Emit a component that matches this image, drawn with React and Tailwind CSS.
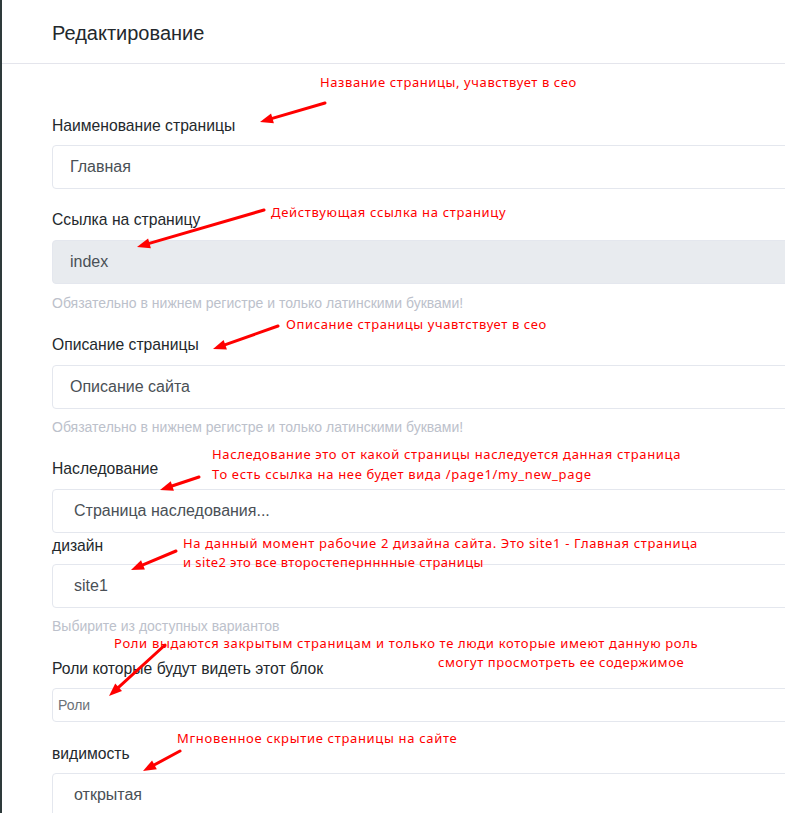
import React from "react";

const arrows = [
  [325, 103, 260, 122],
  [264, 210, 137, 247],
  [278, 326, 213, 349],
  [199, 477, 160, 490],
  [176, 551, 131, 570],
  [165, 645, 109, 696],
  [180, 751, 143, 771],
];

function Arrow({ x1, y1, x2, y2 }) {
  const dx = x2 - x1;
  const dy = y2 - y1;
  const len = Math.hypot(dx, dy);
  const ux = dx / len;
  const uy = dy / len;
  const hl = 13;
  const hw = 5;
  const bx = x2 - ux * hl;
  const by = y2 - uy * hl;
  const px = -uy;
  const py = ux;
  const pts = `${x2},${y2} ${bx + px * hw},${by + py * hw} ${bx - px * hw},${by - py * hw}`;
  return (
    <g>
      <line x1={x1} y1={y1} x2={bx + ux * 2} y2={by + uy * 2} stroke="#ff0000" strokeWidth="3" strokeLinecap="round" />
      <polygon points={pts} fill="#ff0000" />
    </g>
  );
}

const notes = [
  { t: "Название страницы, учавствует в сео", x: 320, y: 73, cls: "tracking-[0.6px]" },
  { t: "Действующая ссылка на страницу", x: 271, y: 203, cls: "tracking-[0.66px]" },
  { t: "Описание страницы учавтствует в сео", x: 286, y: 315, cls: "tracking-[0.6px]" },
  { t: "Наследование это от какой страницы наследуется данная страница", x: 212, y: 445, cls: "tracking-[0.66px]" },
  { t: "То есть ссылка на нее будет вида /page1/my_new_page", x: 212, y: 465, cls: "tracking-[0.68px]" },
  { t: "На данный момент рабочие 2 дизайна сайта. Это site1 - Главная страница", x: 183, y: 534, cls: "tracking-[0.65px]" },
  { t: "и site2 это все второстепернннные страницы", x: 183, y: 553, cls: "tracking-[0.4px]" },
  { t: "Роли выдаются закрытым страницам и только те люди которые имеют данную роль", x: 114, y: 634, cls: "tracking-[0.67px]" },
  { t: "смогут просмотреть ее содержимое", x: 438, y: 653, cls: "tracking-[0.57px]" },
  { t: "Мгновенное скрытие страницы на сайте", x: 177, y: 729, cls: "tracking-[0.68px]" },
];

function Label({ children, className = "" }) {
  return (
    <div className={`h-6 leading-6 text-[15.7px] text-[#23282c] ${className}`}>{children}</div>
  );
}

function Field({ children, className = "", disabled = false }) {
  return (
    <div
      className={`h-[44px] border border-[#e4e7ee] rounded-[4px] flex items-center text-[16px] text-[#4a5056] ${
        disabled ? "bg-[#e8ebef]" : "bg-white"
      } ${className}`}
    >
      {children}
    </div>
  );
}

function Help({ children, className = "" }) {
  return <div className={`h-5 leading-5 text-[14px] text-[#bcc1cb] ${className}`}>{children}</div>;
}

export default function App() {
  return (
    <div
      className="relative w-[785px] h-[813px] overflow-hidden bg-white flex"
      style={{ fontFamily: '"Liberation Sans", Arial, sans-serif' }}
    >
      <div className="w-[2px] shrink-0 bg-[#2e3a3b]" />
      <div className="w-[1000px] shrink-0">
        <div className="h-[64px] border-b border-[#e4e5ec] pl-[50px] flex items-center">
          <div className="text-[20px] text-[#23282c] pt-[2px]">Редактирование</div>
        </div>
        <div className="pl-[50px] pt-[50px]">
          <Label className="mb-[7px]">Наименование страницы</Label>
          <Field className="pl-[17px]">Главная</Field>

          <Label className="mt-[19px] mb-[8px]">Ссылка на страницу</Label>
          <Field className="pl-[17px]" disabled>
            index
          </Field>
          <Help className="mt-[9px]">Обязательно в нижнем регистре и только латинскими буквами!</Help>

          <Label className="mt-[20px] mb-[8px]">Описание страницы</Label>
          <Field className="pl-[17px]">Описание сайта</Field>
          <Help className="mt-[8px]">Обязательно в нижнем регистре и только латинскими буквами!</Help>

          <Label className="mt-[20px] mb-[8px]">Наследование</Label>
          <Field className="pl-[21px]">Страница наследования...</Field>

          <Label className="mt-[1px] mb-[6px]">дизайн</Label>
          <Field className="pl-[21px]">site1</Field>
          <Help className="mt-[8px]">Выбирите из доступных вариантов</Help>

          <Label className="mt-[21px] mb-[7px]">Роли которые будут видеть этот блок</Label>
          <div className="h-[34px] border border-[#e4e7ee] rounded-[4px] flex items-center pl-[5px] text-[14px] text-[#6b7177]">
            Роли
          </div>

          <Label className="mt-[20px] mb-[7px]">видимость</Label>
          <Field className="pl-[21px]">открытая</Field>
        </div>
      </div>

      {notes.map((n, i) => (
        <div
          key={i}
          className={`absolute whitespace-nowrap text-[13px] leading-[18px] text-[#ff0000] ${n.cls}`}
          style={{ left: n.x, top: n.y, fontFamily: '"Noto Sans", "Open Sans", sans-serif' }}
        >
          {n.t}
        </div>
      ))}

      <svg className="absolute inset-0 pointer-events-none" width="785" height="813">
        {arrows.map((a, i) => (
          <Arrow key={i} x1={a[0]} y1={a[1]} x2={a[2]} y2={a[3]} />
        ))}
      </svg>
    </div>
  );
}
